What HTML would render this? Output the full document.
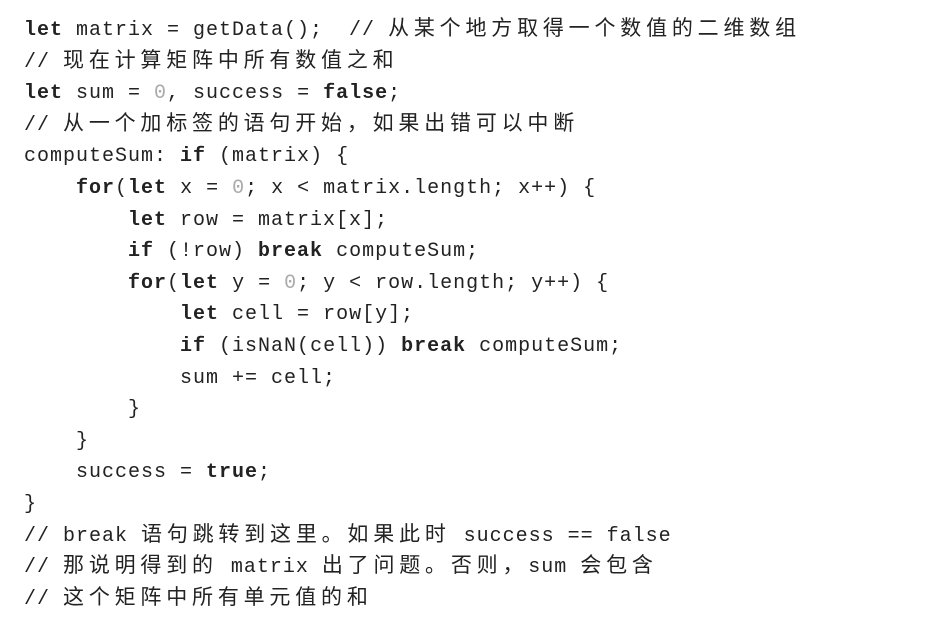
<!DOCTYPE html>
<html><head><meta charset="utf-8"><style>
html,body{margin:0;padding:0;background:#fff;width:927px;height:625px;overflow:hidden}
.code{position:absolute;left:24px;top:15px;font-family:"Liberation Mono","Noto Sans CJK SC",monospace;font-size:20px;letter-spacing:1px;color:#222}
.code div{height:31.6px;line-height:31.6px;white-space:pre}
b{font-weight:bold;color:#222}
.n{color:#aaa}
.c{font-family:"Noto Sans CJK SC","WenQuanYi Zen Hei",sans-serif;font-size:21px;letter-spacing:4.8px;font-weight:normal;line-height:1}
</style></head><body>
<div class="code">
<div><b>let</b> matrix = getData();  // <span class="c">从某个地方取得一个数值的二维数组</span></div>
<div>// <span class="c">现在计算矩阵中所有数值之和</span></div>
<div><b>let</b> sum = <span class="n">0</span>, success = <b>false</b>;</div>
<div>// <span class="c">从一个加标签的语句开始，如果出错可以中断</span></div>
<div>computeSum: <b>if</b> (matrix) {</div>
<div>    <b>for</b>(<b>let</b> x = <span class="n">0</span>; x &lt; matrix.length; x++) {</div>
<div>        <b>let</b> row = matrix[x];</div>
<div>        <b>if</b> (!row) <b>break</b> computeSum;</div>
<div>        <b>for</b>(<b>let</b> y = <span class="n">0</span>; y &lt; row.length; y++) {</div>
<div>            <b>let</b> cell = row[y];</div>
<div>            <b>if</b> (isNaN(cell)) <b>break</b> computeSum;</div>
<div>            sum += cell;</div>
<div>        }</div>
<div>    }</div>
<div>    success = <b>true</b>;</div>
<div>}</div>
<div>// break <span class="c">语句跳转到这里。如果此时</span> success == false</div>
<div>// <span class="c">那说明得到的</span> matrix <span class="c">出了问题。否则，</span>sum <span class="c">会包含</span></div>
<div>// <span class="c">这个矩阵中所有单元值的和</span></div>
</div>
</body></html>
